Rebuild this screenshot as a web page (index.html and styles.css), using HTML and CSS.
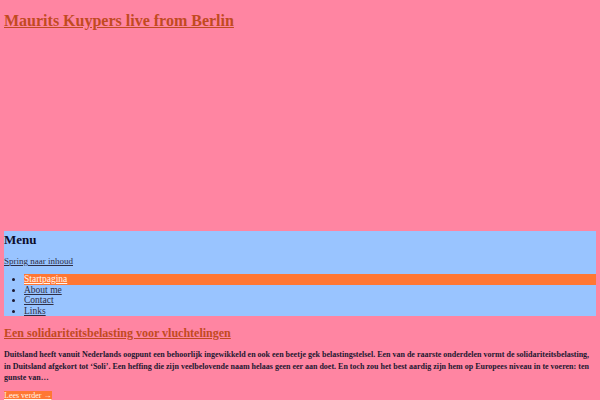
FILE: index.html
```html
<!DOCTYPE html>
<html lang="nl">
<head>
<meta charset="utf-8">
<title>Maurits Kuypers live from Berlin</title>
<link rel="stylesheet" href="styles.css">
</head>
<body>
<header class="site-header">
  <h1 class="site-title"><a href="#">Maurits Kuypers live from Berlin</a></h1>
</header>
<nav class="menu">
  <h2 class="menu-title">Menu</h2>
  <a class="skip" href="#">Spring naar inhoud</a>
  <ul class="menu-list">
    <li class="current"><a href="#">Startpagina</a></li>
    <li><a href="#">About me</a></li>
    <li><a href="#">Contact</a></li>
    <li><a href="#">Links</a></li>
  </ul>
</nav>
<article class="post">
  <h2 class="post-title"><a href="#">Een solidariteitsbelasting voor vluchtelingen</a></h2>
  <p class="excerpt">Duitsland heeft vanuit Nederlands oogpunt een behoorlijk ingewikkeld en ook een beetje gek belastingstelsel. Een van de raarste onderdelen vormt de solidariteitsbelasting, in Duitsland afgekort tot ‘Soli’. Een heffing die zijn veelbelovende naam helaas geen eer aan doet. En toch zou het best aardig zijn hem op Europees niveau in te voeren: ten gunste van…</p>
  <a class="more" href="#">Lees verder →</a>
</article>
</body>
</html>
```
FILE: styles.css
```css
html, body {
  margin: 0;
  padding: 0;
}
body {
  background: #ff85a2;
  font-family: "Liberation Serif", "Times New Roman", serif;
  color: #1c1830;
  padding: 0 4px;
  overflow: hidden;
}
.site-header {
  height: 231px;
}
.site-title {
  margin: 0;
  padding-top: 11px;
  font-size: 16px;
  font-weight: bold;
  line-height: 20px;
}
.site-title a {
  color: #c24a1f;
}
.menu {
  background: #99c4ff;
  padding: 1px 0 0;
}
.menu-title {
  margin: 0;
  font-size: 13px;
  line-height: 16px;
  color: #0c0c2a;
}
.skip {
  display: block;
  margin-top: 7px;
  font-size: 9px;
  line-height: 12px;
  color: #2e2e46;
}
.menu-list {
  margin: 7px 0 0;
  padding-left: 20px;
  font-size: 9.5px;
  line-height: 10.5px;
}
.menu-list a {
  color: #2e2e46;
}
.menu-list li.current {
  background: #ff7733;
}
.menu-list li.current a {
  color: #fff6ee;
}
.post-title {
  margin: 9px 0 0;
  font-size: 12px;
  line-height: 16px;
}
.post-title a {
  color: #c24a1f;
}
.excerpt {
  margin: 8px 0 0;
  font-size: 8px;
  line-height: 11.5px;
  font-weight: bold;
}
.more {
  display: inline-block;
  margin-top: 7px;
  background: #ff7733;
  color: #fff6ee;
  font-size: 8px;
  line-height: 10px;
}
```
